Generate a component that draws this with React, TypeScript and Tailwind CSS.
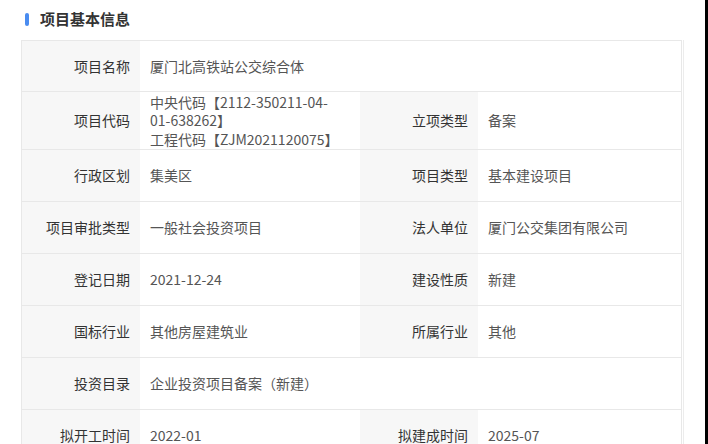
type Cell = { label: string; value: React.ReactNode };

const rows: { cells: Cell[]; h: string; span?: boolean }[] = [
  { cells: [{ label: '项目名称', value: '厦门北高铁站公交综合体' }], span: true, h: 'h-[51px]' },
  {
    cells: [
      {
        label: '项目代码',
        value: (
          <>
            中央代码【2112-350211-04-01-638262】
            <br />
            工程代码【ZJM2021120075】
          </>
        ),
      },
      { label: '立项类型', value: '备案' },
    ],
    h: 'h-[58px] leading-[18.5px]',
  },
  {
    cells: [
      { label: '行政区划', value: '集美区' },
      { label: '项目类型', value: '基本建设项目' },
    ],
    h: 'h-[52px]',
  },
  {
    cells: [
      { label: '项目审批类型', value: '一般社会投资项目' },
      { label: '法人单位', value: '厦门公交集团有限公司' },
    ],
    h: 'h-[52px]',
  },
  {
    cells: [
      { label: '登记日期', value: '2021-12-24' },
      { label: '建设性质', value: '新建' },
    ],
    h: 'h-[52px]',
  },
  {
    cells: [
      { label: '国标行业', value: '其他房屋建筑业' },
      { label: '所属行业', value: '其他' },
    ],
    h: 'h-[52px]',
  },
  { cells: [{ label: '投资目录', value: '企业投资项目备案（新建）' }], span: true, h: 'h-[52px]' },
  {
    cells: [
      { label: '拟开工时间', value: '2022-01' },
      { label: '拟建成时间', value: '2025-07' },
    ],
    h: 'h-[52px]',
  },
];

function Label({ children }: { children: React.ReactNode }) {
  return (
    <div className="flex items-center justify-end bg-[#f7f7f7] pr-[10px] text-[#333]">
      {children}
    </div>
  );
}

function Value({ children, wide }: { children: React.ReactNode; wide?: boolean }) {
  return (
    <div
      className={`flex items-center bg-white pl-[10px] pr-[20px] text-[#555] ${
        wide ? 'col-span-3' : ''
      }`}
    >
      {children}
    </div>
  );
}

export default function App() {
  return (
    <div
      className="relative h-[444px] w-[708px] overflow-hidden bg-white"
      style={{ fontFamily: '"Noto Sans CJK SC", "Noto Sans", sans-serif' }}
    >
      <div className="flex h-[40px] items-center pb-[1px] pl-[25px]">
        <span className="mr-[11px] h-[13px] w-[4px] rounded-full bg-[#4a8cf0]" />
        <span className="text-[15px] font-bold text-[#333]">项目基本信息</span>
      </div>

      <div className="ml-[21px] w-[661px] border border-[#e8e8e8] text-[14px]">
        {rows.map((row, i) => (
          <div
            key={i}
            className={`grid grid-cols-[118px_220px_118px_1fr] border-b border-[#e8e8e8] ${row.h}`}
          >
            {row.cells.map((c, j) => (
              <div key={j} className="contents">
                <Label>{c.label}</Label>
                <Value wide={row.span}>{c.value}</Value>
              </div>
            ))}
          </div>
        ))}
      </div>

      <div className="absolute top-[40px] bottom-0 left-[683px] w-px bg-[#ececec]" />
      <div className="absolute top-0 right-0 bottom-0 w-[3px] bg-black" />
    </div>
  );
}
